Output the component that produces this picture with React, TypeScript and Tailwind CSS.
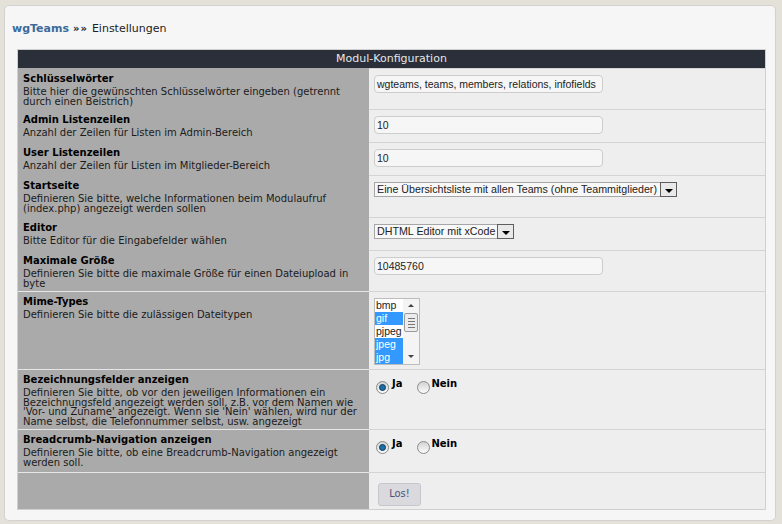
import React from 'react';

const label = '[font-family:"DejaVu_Sans",Verdana,sans-serif]';
const cond = '[font-family:"DejaVu_Sans_Condensed","DejaVu_Sans",sans-serif]';

type Row = {
  title?: string;
  desc?: string;
  h: string;
  leftBorder: string;
  control: React.ReactNode;
};

function TextInput({ value }: { value: string }) {
  return (
    <div className="w-[229px] h-[18px] rounded-[4px] border border-[#cdcdcd] bg-[#f6f6f6] px-[2px] text-[10.5px] leading-[16px] text-[#222] font-['Liberation_Sans',Arial,sans-serif] whitespace-nowrap overflow-hidden">
      {value}
    </div>
  );
}

function Select({ value, width }: { value: string; width: string }) {
  return (
    <div className={`${width} h-[15px] flex items-stretch border border-[#a6a6a6] bg-[#f8f8f8]`}>
      <span className="flex-1 pl-[2px] text-[10.7px] leading-[13px] text-[#222] font-['Liberation_Sans',Arial,sans-serif] whitespace-nowrap overflow-hidden">
        {value}
      </span>
      <span className="w-[17px] -my-px -mr-px border border-[#5e5e5e] bg-[#e9e9e9] flex items-end justify-center pb-[3px]">
        <span className="w-0 h-0 border-l-[4px] border-r-[4px] border-t-[4px] border-l-transparent border-r-transparent border-t-black" />
      </span>
    </div>
  );
}

function MimeList() {
  const items = [
    { t: 'bmp', s: false },
    { t: 'gif', s: true },
    { t: 'pjpeg', s: false },
    { t: 'jpeg', s: true },
    { t: 'jpg', s: true },
  ];
  return (
    <div className="w-[46px] h-[67px] flex border border-[#bdbdbd] bg-white">
      <div className="w-[28px] font-['Liberation_Sans',Arial,sans-serif] text-[10.5px]">
        {items.map((i) => (
          <div
            key={i.t}
            className={`h-[13px] leading-[13px] pl-px overflow-hidden ${i.s ? 'bg-[#3399ff] text-white' : 'text-[#222]'}`}
          >
            {i.t}
          </div>
        ))}
      </div>
      <div className="flex-1 flex flex-col items-center bg-[#f4f4f4]">
        <span className="mt-[5px] w-0 h-0 border-l-[3px] border-r-[3px] border-b-[3px] border-l-transparent border-r-transparent border-b-[#444]" />
        <div className="mt-[6px] w-[14px] h-[19px] rounded-[2px] border border-[#9a9a9a] bg-[#ececec] flex flex-col items-center justify-center gap-[2px]">
          <span className="w-[7px] h-px bg-[#777]" />
          <span className="w-[7px] h-px bg-[#777]" />
          <span className="w-[7px] h-px bg-[#777]" />
          <span className="w-[7px] h-px bg-[#777]" />
        </div>
        <span className="mt-auto mb-[6px] w-0 h-0 border-l-[3px] border-r-[3px] border-t-[3px] border-l-transparent border-r-transparent border-t-[#444]" />
      </div>
    </div>
  );
}

function Radio({ checked }: { checked?: boolean }) {
  return (
    <span className="mt-[3px] w-[13px] h-[13px] rounded-full border border-[#8a8a8a] bg-gradient-to-b from-[#d4d4d4] to-[#fbfbfb] flex items-center justify-center">
      {checked && <span className="w-[7px] h-[7px] rounded-full bg-[#1a6fa6] border border-[#0e3c5c]" />}
    </span>
  );
}

function YesNo() {
  return (
    <div className={`flex items-start pl-[2px] pt-[2px] ${label} text-[10px] font-bold text-black`}>
      <Radio checked />
      <span className="ml-[3px] leading-[12px]">Ja</span>
      <span className="ml-[15px]">
        <Radio />
      </span>
      <span className="ml-[1px] leading-[12px]">Nein</span>
    </div>
  );
}

const rows: Row[] = [
  {
    title: 'Schlüsselwörter',
    desc: 'Bitte hier die gewünschten Schlüsselwörter eingeben (getrennt durch einen Beistrich)',
    h: 'h-[41px]',
    leftBorder: 'border-[#aaaaaa]',
    control: <TextInput value="wgteams, teams, members, relations, infofields" />,
  },
  {
    title: 'Admin Listenzeilen',
    desc: 'Anzahl der Zeilen für Listen im Admin-Bereich',
    h: 'h-[33px]',
    leftBorder: 'border-[#aaaaaa]',
    control: <TextInput value="10" />,
  },
  {
    title: 'User Listenzeilen',
    desc: 'Anzahl der Zeilen für Listen im Mitglieder-Bereich',
    h: 'h-[33px]',
    leftBorder: 'border-[#aaaaaa]',
    control: <TextInput value="10" />,
  },
  {
    title: 'Startseite',
    desc: 'Definieren Sie bitte, welche Informationen beim Modulaufruf (index.php) angezeigt werden sollen',
    h: 'h-[42px]',
    leftBorder: 'border-[#aaaaaa]',
    control: <Select value="Eine Übersichtsliste mit allen Teams (ohne Teammitglieder)" width="w-[303px]" />,
  },
  {
    title: 'Editor',
    desc: 'Bitte Editor für die Eingabefelder wählen',
    h: 'h-[33px]',
    leftBorder: 'border-[#aaaaaa]',
    control: <Select value="DHTML Editor mit xCode" width="w-[140px]" />,
  },
  {
    title: 'Maximale Größe',
    desc: 'Definieren Sie bitte die maximale Größe für einen Dateiupload in byte',
    h: 'h-[41px]',
    leftBorder: 'border-[#aaaaaa]',
    control: <TextInput value="10485760" />,
  },
  {
    title: 'Mime-Types',
    desc: 'Definieren Sie bitte die zulässigen Dateitypen',
    h: 'h-[78px]',
    leftBorder: 'border-[#e6e6e6]',
    control: <MimeList />,
  },
  {
    title: 'Bezeichnungsfelder anzeigen',
    desc: "Definieren Sie bitte, ob vor den jeweiligen Informationen ein Bezeichnungsfeld angezeigt werden soll, z.B. vor dem Namen wie 'Vor- und Zuname' angezeigt. Wenn sie 'Nein' wählen, wird nur der Name selbst, die Telefonnummer selbst, usw. angezeigt",
    h: 'h-[60px]',
    leftBorder: 'border-[#e6e6e6]',
    control: <YesNo />,
  },
  {
    title: 'Breadcrumb-Navigation anzeigen',
    desc: 'Definieren Sie bitte, ob eine Breadcrumb-Navigation angezeigt werden soll.',
    h: 'h-[43px]',
    leftBorder: 'border-[#e6e6e6]',
    control: <YesNo />,
  },
  {
    h: 'h-[37px]',
    leftBorder: 'border-[#e6e6e6]',
    control: (
      <button className={`ml-[4px] w-[43px] h-[23px] rounded-[3px] border border-[#c6c6cc] bg-[#d9d9de] ${cond} text-[11px] text-[#4b5478]`}>
        Los!
      </button>
    ),
  },
];

export default function App() {
  return (
    <div className="w-[782px] h-[524px] bg-[#e4e1d9] pt-[5px] pl-[4px]">
      <div className="w-[772px] h-[516px] rounded-[5px] border border-[#d2d2d2] bg-[#f6f6f6] pl-[7px] pt-[15px]">
        <div className="h-[16px] leading-[16px] text-[11px] font-['DejaVu_Sans',Verdana,sans-serif] text-[#222] whitespace-nowrap">
          <span className="font-bold text-[#3b6b9b]">wgTeams</span>
          <span className="ml-[4px] font-bold text-[10px] tracking-[1px]">»»</span>
          <span className="ml-[4px]">Einstellungen</span>
        </div>

        <div className="mt-[12px] ml-[5px] w-[749px] border border-[#d0d0d0]">
          <div className="h-[18px] bg-[#2b2f3a] text-center text-[11px] leading-[18px] text-[#e6e6e6] font-['DejaVu_Sans',Verdana,sans-serif]">
            Modul-Konfiguration
          </div>
          {rows.map((r, i) => (
            <div key={i} className={`grid grid-cols-[351px_1fr] ${r.h}`}>
              <div className={`bg-[#aaaaaa] border-t ${r.leftBorder} pl-[5px] pr-[8px] pt-[4px] ${label} text-[#1b1b1b]`}>
                {r.title && <div className="text-[10px] font-bold leading-[12px] text-black">{r.title}</div>}
                {r.desc && <div className="mt-[2px] text-[10px] leading-[9.5px]">{r.desc}</div>}
              </div>
              <div className="bg-[#eeeeee] border-t border-[#d4d4d4] pl-[5px] pt-[6px]">{r.control}</div>
            </div>
          ))}
        </div>
      </div>
    </div>
  );
}
